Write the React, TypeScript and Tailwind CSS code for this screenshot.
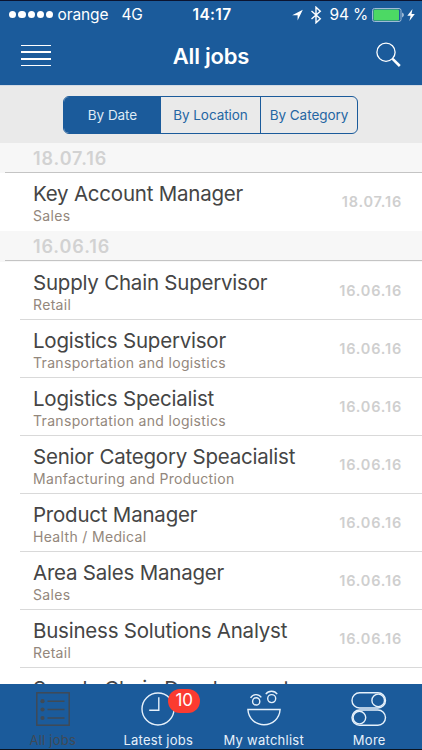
import clsx from "clsx";

type Job = { title: string; category: string; date: string };
type Section = { date: string; jobs: Job[] };

const sections: Section[] = [
  {
    date: "18.07.16",
    jobs: [{ title: "Key Account Manager", category: "Sales", date: "18.07.16" }],
  },
  {
    date: "16.06.16",
    jobs: [
      { title: "Supply Chain Supervisor", category: "Retail", date: "16.06.16" },
      { title: "Logistics Supervisor", category: "Transportation and logistics", date: "16.06.16" },
      { title: "Logistics Specialist", category: "Transportation and logistics", date: "16.06.16" },
      { title: "Senior Category Speacialist", category: "Manfacturing and Production", date: "16.06.16" },
      { title: "Product Manager", category: "Health / Medical", date: "16.06.16" },
      { title: "Area Sales Manager", category: "Sales", date: "16.06.16" },
      { title: "Business Solutions Analyst", category: "Retail", date: "16.06.16" },
      { title: "Supply Chain Development", category: "Retail", date: "16.06.16" },
    ],
  },
];

function StatusBar() {
  return (
    <div className="grid h-[27px] grid-cols-[1fr_auto_1fr] items-center pr-[7px] pl-[9px] text-[15.5px] leading-none">
      <div className="flex items-center">
        <div className="flex gap-[2px]">
          {[0, 1, 2, 3, 4].map((i) => (
            <span key={i} className="size-[7.3px] rounded-full bg-white" />
          ))}
        </div>
        <span className="ml-[4px] tracking-[-0.1px]">orange</span>
        <span className="ml-[13px] tracking-[-0.1px]">4G</span>
      </div>
      <span className="font-semibold tracking-[0.3px]">14:17</span>
      <div className="flex items-center justify-end">
        <svg width="11" height="12" viewBox="0 0 11 12" fill="currentColor">
          <path d="M10.8 0.8 5.6 11.4V6.2H0.2Z" />
        </svg>
        <svg
          width="12"
          height="18"
          viewBox="0 0 12 18"
          fill="none"
          stroke="currentColor"
          strokeWidth="1.4"
          className="ml-[7px]"
        >
          <path d="M1.5 5 10.3 12.8 6 16.8V1.2L10.3 5.2 1.5 13" />
        </svg>
        <span className="ml-[8px] tracking-[-0.2px] whitespace-nowrap">94 %</span>
        <svg width="33" height="14" viewBox="0 0 33 14" className="ml-[4px]">
          <rect x="0.5" y="0.5" width="28.5" height="13" rx="2" fill="none" stroke="#9fbbd6" />
          <rect x="1.5" y="1.5" width="25.5" height="11" rx="1" fill="#4cd964" />
          <path d="M30.3 4.6c1.8 0.7 1.8 4.1 0 4.8Z" fill="#d7e4f0" />
        </svg>
        <svg width="8" height="12" viewBox="0 0 8 12" fill="currentColor" className="ml-[2px]">
          <path d="M5.5 0 0.3 6.7H3.6L2.4 12 7.8 5H4.5Z" />
        </svg>
      </div>
    </div>
  );
}

function NavBar() {
  return (
    <div className="grid h-[57px] grid-cols-[1fr_auto_1fr] items-center px-[21px]">
      <div className="mb-[2px] flex w-[30px] flex-col gap-[5px]">
        {[0, 1, 2, 3].map((i) => (
          <span key={i} className="h-[1.7px] bg-white" />
        ))}
      </div>
      <h1 className="text-[22px] font-semibold tracking-[-0.2px]">All jobs</h1>
      <svg
        width="25"
        height="26"
        viewBox="0 0 25 26"
        fill="none"
        stroke="currentColor"
        className="mb-[3px] justify-self-end"
      >
        <circle cx="10" cy="10.2" r="9.1" strokeWidth="1.3" />
        <path d="M16.6 16.8 23.8 24" strokeWidth="2.6" />
      </svg>
    </div>
  );
}

function FilterBar() {
  return (
    <div className="flex h-[58px] justify-center border-t border-[#d3dae4] bg-[#eaeaea] pt-[10px]">
      <div className="mr-[1px] flex h-[38px] w-[295px] overflow-hidden rounded-[6px] border-[1.5px] border-[#1b5b9b] text-[13.5px] tracking-[-0.05px] text-[#2566a3]">
        <button className="w-[97px] bg-[#1b5b9b] text-[#dfeaf5]">By Date</button>
        <button className="w-[99px]">By Location</button>
        <button className="flex-1 border-l border-[#1b5b9b]">By Category</button>
      </div>
    </div>
  );
}

function JobRow({ job, last }: { job: Job; last: boolean }) {
  return (
    <li className={clsx("ml-5 flex h-[58px] justify-between pr-[20px] pl-[13px]", !last && "border-b border-[#d9d9d9]")}>
      <div className="pt-[8px] whitespace-nowrap">
        <p className="text-[20.5px] leading-[25px] tracking-[-0.22px] text-[#454545]">{job.title}</p>
        <p className="pt-[1px] text-[14px] leading-[18px] tracking-[0.33px] text-[#93877c]">{job.category}</p>
      </div>
      <span className="pt-[19px] text-[14.5px] leading-[20px] font-semibold tracking-[0.8px] text-[#cfcfcf]">
        {job.date}
      </span>
    </li>
  );
}

function JobList() {
  return (
    <div className="min-h-0 flex-1 overflow-hidden">
      {sections.map((section, i) => (
        <section key={section.date}>
          <div className={clsx("bg-[#f7f7f7]", i === 0 ? "h-[30px]" : "h-[31px]")}>
            <h2 className="ml-[5px] h-[30px] border-b border-[#c4c4c4] pl-7 text-[18px] leading-[31px] font-semibold tracking-[0.9px] text-[#d2d2d2]">
              {section.date}
            </h2>
          </div>
          <ul>
            {section.jobs.map((job, j) => (
              <JobRow key={job.title} job={job} last={j === section.jobs.length - 1} />
            ))}
          </ul>
        </section>
      ))}
    </div>
  );
}

function ListIcon() {
  return (
    <svg width="34" height="34" viewBox="0 0 34 34" fill="none" stroke="currentColor" strokeWidth="1.5">
      <rect x="0.8" y="0.8" width="32.4" height="32.4" />
      <path d="M11.5 9.2H28.5M11.5 17.5H28.5M11.5 26H28.5" />
      <g fill="currentColor" stroke="none">
        <circle cx="6.5" cy="9.2" r="2.1" />
        <circle cx="6.5" cy="17.5" r="2.1" />
        <circle cx="6.5" cy="26" r="2.1" />
      </g>
    </svg>
  );
}

function ClockIcon() {
  return (
    <svg width="34" height="34" viewBox="0 0 34 34" fill="none" stroke="currentColor" strokeWidth="1.4">
      <circle cx="17" cy="17" r="16" />
      <path d="M17.8 5.2V18.3H8.2" />
    </svg>
  );
}

function SmileyIcon() {
  return (
    <svg width="34" height="36" viewBox="0 0 34 36" fill="none" stroke="currentColor" strokeWidth="1.4">
      <path d="M0.9 19.5H33.1C32.5 28.5 25.7 34.7 17 34.7S1.5 28.5 0.9 19.5Z" />
      <circle cx="9.2" cy="11.4" r="3.6" />
      <circle cx="24.7" cy="8.6" r="4" />
      <path d="M3.6 7.8C6 3.8 11.5 3.4 14.3 7.4M18.8 4.1C21.5 0.2 27.7 0.2 30.2 4.2" />
    </svg>
  );
}

function SwitchesIcon() {
  return (
    <svg width="36" height="34" viewBox="0 0 36 34" fill="none" stroke="currentColor" strokeWidth="1.4">
      <rect x="1" y="0.8" width="33.5" height="15.2" rx="7.6" />
      <rect x="1" y="18" width="33.5" height="15.2" rx="7.6" />
      <circle cx="27.2" cy="8.4" r="6.3" />
      <circle cx="8.4" cy="25.6" r="6.3" />
    </svg>
  );
}

const tabs = [
  { label: "All jobs", icon: ListIcon, active: true },
  { label: "Latest jobs", icon: ClockIcon, badge: 10 },
  { label: "My watchlist", icon: SmileyIcon },
  { label: "More", icon: SwitchesIcon },
];

function TabBar() {
  return (
    <nav className="grid h-[66px] shrink-0 grid-cols-4 border-b border-[#0b1420] bg-[#1b5b9b]">
      {tabs.map(({ label, icon: Icon, active, badge }) => (
        <button
          key={label}
          className={clsx("flex flex-col items-center", active ? "text-[#3f4a56]" : "text-[#e6f1fb]")}
        >
          <span className="relative flex h-[42px] items-end">
            <Icon />
            {badge && (
              <span className="absolute top-[4.5px] left-[27px] flex h-[24px] w-[32px] items-center justify-center rounded-full bg-[#fb3b30] text-[17px] text-white">
                {badge}
              </span>
            )}
          </span>
          <span className="mt-[6px] text-[13px] leading-[16px] tracking-[0.25px] whitespace-nowrap">{label}</span>
        </button>
      ))}
    </nav>
  );
}

export default function App() {
  return (
    <div className="flex h-[750px] w-[422px] flex-col overflow-hidden bg-white font-[Inter,sans-serif]">
      <header className="h-[85px] shrink-0 border-t border-[#0b1430] bg-[#1b5b9b] text-white">
        <StatusBar />
        <NavBar />
      </header>
      <FilterBar />
      <JobList />
      <TabBar />
    </div>
  );
}
